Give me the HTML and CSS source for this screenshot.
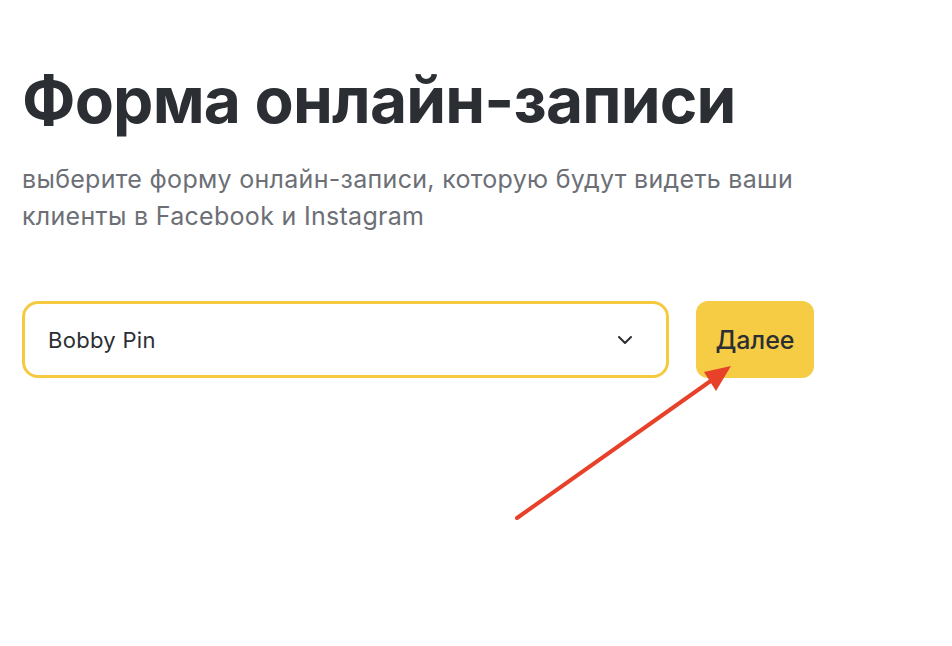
FILE: index.html
```html
<!DOCTYPE html>
<html lang="ru">

<head>
    <meta charset="UTF-8">
    <meta name="viewport" content="width=device-width, initial-scale=1.0">
    <title>Форма онлайн-записи</title>
    <link rel="stylesheet" href="styles.css">
</head>

<body>
    <div class="container">
        <h1 class="title">Форма онлайн-записи</h1>
        <p class="subtitle">выберите форму онлайн-записи, которую будут видеть ваши<br>клиенты в Facebook и Instagram</p>

        <div class="form-row">
            <div class="select-box">
                <span class="select-value">Bobby Pin</span>
                <svg class="chevron" width="16" height="10" viewBox="0 0 16 10">
                    <path d="M2 2 L8 8 L14 2" fill="none" stroke="#2b2f33" stroke-width="2" stroke-linecap="round" stroke-linejoin="round" />
                </svg>
            </div>
            <button type="button" class="btn-next">Далее</button>
        </div>
    </div>

    <!-- annotation arrow over the screenshot -->
    <svg class="arrow" width="952" height="646" viewBox="0 0 952 646">
        <line x1="517" y1="518" x2="712" y2="380" stroke="#e8412a" stroke-width="4" stroke-linecap="round" />
        <polygon points="731,366 704,372 716,391" fill="#e8412a" />
    </svg>
</body>

</html>
```

FILE: styles.css
```css
* {
    box-sizing: border-box;
    margin: 0;
    padding: 0;
}

body {
    font-family: 'Inter', 'Noto Sans', sans-serif;
    background-color: #fff;
    color: #2b2f33;
}

.container {
    padding: 60px 22px 0;
}

.title {
    font-size: 64px;
    font-weight: 700;
    line-height: 80px;
    color: #2b2f33;
    letter-spacing: -0.8px;
}

.subtitle {
    margin-top: 21px;
    font-size: 25px;
    line-height: 37px;
    letter-spacing: 0.3px;
    color: #6c6f76;
}

.form-row {
    display: flex;
    align-items: stretch;
    gap: 27px;
    margin-top: 66px;
}

.select-box {
    width: 647px;
    height: 77px;
    border: 3px solid #f6ca3f;
    border-radius: 16px;
    display: flex;
    align-items: center;
    justify-content: space-between;
    padding: 0 33px 0 23px;
}

.select-value {
    font-size: 22px;
    letter-spacing: 0.3px;
    color: #2b2f33;
}

.btn-next {
    width: 118px;
    height: 77px;
    background-color: #f7cc45;
    border: none;
    border-radius: 12px;
    font-family: 'Inter', 'Noto Sans', sans-serif;
    font-size: 25px;
    font-weight: 500;
    color: #2b2f33;
    cursor: pointer;
}

.arrow {
    position: absolute;
    top: 0;
    left: 0;
    pointer-events: none;
}
```
